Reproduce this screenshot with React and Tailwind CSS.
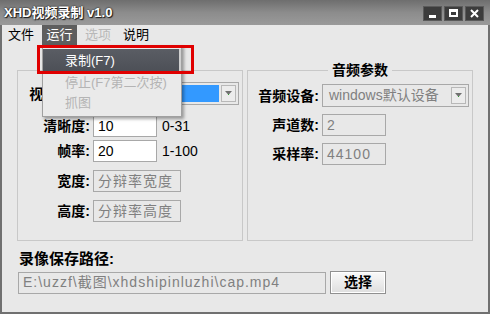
import React from 'react';

const cjk = { fontFamily: '"Liberation Sans", "Noto Sans CJK SC", sans-serif' };

function Label({ children, w }) {
  return (
    <span className={`${w} text-right text-[14px] font-bold text-black leading-none`} style={cjk}>
      {children}
    </span>
  );
}

function TextBox({ value, w, disabled }) {
  return (
    <div
      className={`${w} h-[22px] border border-[#a8a8a8] flex items-center px-1 text-[14px] ${
        disabled ? 'bg-[#e8e8e8] text-[#808080] tracking-[1px]' : 'bg-white text-black'
      }`}
      style={cjk}
    >
      {value}
    </div>
  );
}

function Combo({ value, w, selected }) {
  return (
    <div className={`${w} h-[23px] border border-[#a8a8a8] bg-[#e8e8e8] flex p-[2px] gap-[2px]`}>
      <div
        className={`flex-1 flex items-center px-1 text-[14px] ${selected ? 'bg-[#3399ff] text-white' : 'text-[#808080]'}`}
        style={cjk}
      >
        {value}
      </div>
      <div className="w-[15px] border border-[#b8b8b8] bg-[#ececec] flex items-center justify-center">
        <svg width="7" height="5" viewBox="0 0 7 5">
          <path d="M0 0 L7 0 L3.5 4 Z" fill="#707070" />
          <rect x="3" y="3" width="1" height="1" fill="#2fa02f" />
        </svg>
      </div>
    </div>
  );
}

export default function App() {
  return (
    <div className="w-[490px] h-[314px] relative bg-[#707070] flex flex-col overflow-hidden select-none">
      {/* title bar */}
      <div className="h-[25px] bg-gradient-to-b from-[#6e6e6e] via-[#8c8c8c] to-[#9a9a9a] flex items-center justify-between pl-[4px] pr-[6px]">
        <span
          className="text-[13px] font-bold text-white"
          style={{ ...cjk, textShadow: '0 0 2px #000, 1px 1px 1px #222' }}
        >
          XHD视频录制 v1.0
        </span>
        <div className="flex gap-[2px] pt-[1px]">
          {['min', 'max', 'close'].map((k) => (
            <div
              key={k}
              className="w-[19px] h-[15px] bg-[#3c3c3c] border border-[#5a5a5a] flex items-center justify-center"
            >
              {k === 'min' && <div className="w-[7px] h-[3px] bg-white mt-[6px]" />}
              {k === 'max' && <div className="w-[9px] h-[8px] border-2 border-white border-t-[3px]" />}
              {k === 'close' && (
                <svg width="9" height="9" viewBox="0 0 9 9">
                  <path d="M1 1 L8 8 M8 1 L1 8" stroke="#fff" strokeWidth="2" />
                </svg>
              )}
            </div>
          ))}
        </div>
      </div>

      {/* client */}
      <div className="flex-1 mx-[2px] mb-[2px] bg-[#e8e8e8] flex flex-col">
        {/* menu bar */}
        <div className="h-[20px] flex items-stretch text-[13px] pl-[4px]" style={cjk}>
          <span className="px-[2px] flex items-center text-black">文件</span>
          <span className="ml-[6px] w-[35px] bg-[#5e5e5e] text-white flex items-center justify-center">运行</span>
          <span className="ml-[6px] px-[2px] flex items-center text-[#b8b8b8]">选项</span>
          <span className="ml-[8px] px-[2px] flex items-center text-black">说明</span>
        </div>

        <div className="flex-1 pl-[15px] pt-[18px] flex flex-col">
          <div className="flex gap-[4px]">
            {/* video group */}
            <fieldset className="w-[226px] h-[178px] border border-[#c8c8c8] px-0">
              <legend className="mx-auto px-1 text-[14px] font-bold leading-none" style={cjk}>
                视频参数
              </legend>
              <div className="flex flex-col mt-[5px]">
                <div className="flex items-center gap-[3px]">
                  <Label w="w-[72px]">视频设备:</Label>
                  <Combo w="w-[146px]" value="" selected />
                </div>
                <div className="flex items-center gap-[3px] mt-[10px]">
                  <Label w="w-[72px]">清晰度:</Label>
                  <TextBox w="w-[64px]" value="10" />
                  <span className="ml-[2px] text-[14px]" style={cjk}>0-31</span>
                </div>
                <div className="flex items-center gap-[3px] mt-[3px]">
                  <Label w="w-[72px]">帧率:</Label>
                  <TextBox w="w-[64px]" value="20" />
                  <span className="ml-[2px] text-[14px]" style={cjk}>1-100</span>
                </div>
                <div className="flex items-center gap-[3px] mt-[8px]">
                  <Label w="w-[72px]">宽度:</Label>
                  <TextBox w="w-[88px]" value="分辩率宽度" disabled />
                </div>
                <div className="flex items-center gap-[3px] mt-[8px]">
                  <Label w="w-[72px]">高度:</Label>
                  <TextBox w="w-[88px]" value="分辩率高度" disabled />
                </div>
              </div>
            </fieldset>

            {/* audio group */}
            <fieldset className="w-[226px] h-[178px] border border-[#c8c8c8] px-0">
              <legend className="mx-auto px-1 text-[14px] font-bold leading-none" style={cjk}>
                音频参数
              </legend>
              <div className="flex flex-col gap-[7px] mt-[7px]">
                <div className="flex items-center gap-[3px]">
                  <Label w="w-[71px]">音频设备:</Label>
                  <Combo w="w-[147px]" value="windows默认设备" />
                </div>
                <div className="flex items-center gap-[3px]">
                  <Label w="w-[71px]">声道数:</Label>
                  <TextBox w="w-[64px]" value="2" disabled />
                </div>
                <div className="flex items-center gap-[3px]">
                  <Label w="w-[71px]">采样率:</Label>
                  <TextBox w="w-[64px]" value="44100" disabled />
                </div>
              </div>
            </fieldset>
          </div>

          {/* save path */}
          <div className="pl-[2px] mt-[10px] text-[15px] font-bold leading-none" style={cjk}>
            录像保存路径:
          </div>
          <div className="flex items-center gap-[4px] mt-[5px] pl-[1px]">
            <TextBox w="w-[308px]" value="E:\uzzf\截图\xhdshipinluzhi\cap.mp4" disabled />
            <button
              className="w-[56px] h-[23px] border border-[#909090] bg-gradient-to-b from-[#fafafa] to-[#dedede] text-[14px] font-bold shadow-[inset_0_0_0_1px_#fff]"
              style={cjk}
            >
              选择
            </button>
          </div>
        </div>
      </div>

      {/* dropdown menu */}
      <div
        className="absolute left-[42px] top-[45px] w-[140px] h-[72px] bg-[#eaeaea] border border-[#a0a0a0] shadow-[2px_2px_3px_rgba(0,0,0,0.35)] flex flex-col pt-[3px] text-[13px]"
        style={cjk}
      >
        <div className="h-[24px] bg-gradient-to-b from-[#5a5d64] to-[#4c4f56] text-white flex items-center pl-[22px] border-r-2 border-[#d0d0d0]">
          录制(F7)
        </div>
        <div className="h-[20px] text-[#b4b4b4] flex items-center pl-[22px]">停止(F7第二次按)</div>
        <div className="h-[20px] text-[#b4b4b4] flex items-center pl-[22px]">抓图</div>
      </div>
      <div className="absolute left-[37px] top-[45px] w-[157px] h-[29px] border-[3px] border-[#e00000]" />
    </div>
  );
}
